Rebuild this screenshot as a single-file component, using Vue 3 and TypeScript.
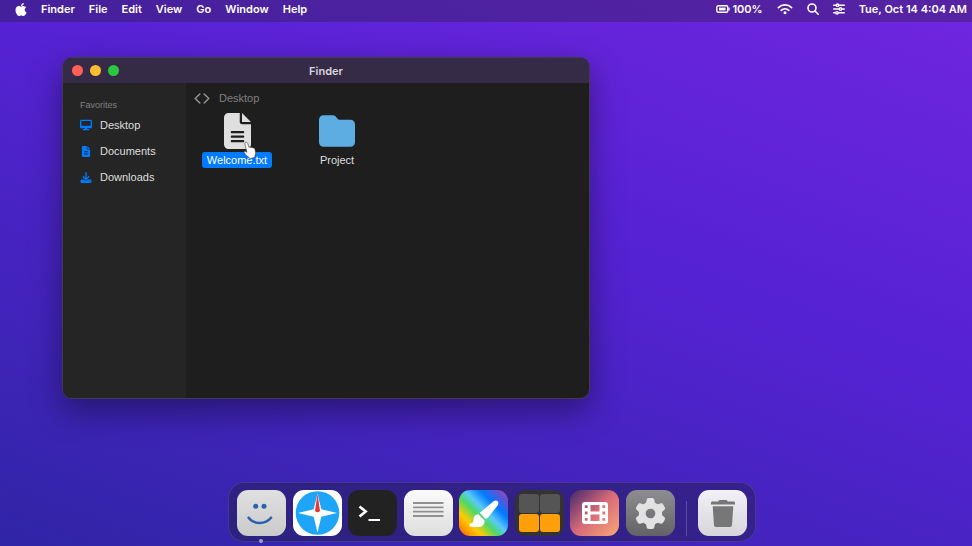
<script setup lang="ts">
import { ref } from 'vue'

interface Place {
  name: string
  icon: 'display' | 'document' | 'download'
}

const menus: string[] = ['Finder', 'File', 'Edit', 'View', 'Go', 'Window', 'Help']

const places: Place[] = [
  { name: 'Desktop', icon: 'display' },
  { name: 'Documents', icon: 'document' },
  { name: 'Downloads', icon: 'download' },
]

const selected = ref<string>('Welcome.txt')
const folder = ref<string>('Desktop')
</script>

<template>
  <div class="screen">
    <header class="menubar">
      <nav class="menus" aria-label="Menu bar">
        <button class="menu apple" type="button" aria-label="Apple menu">
          <svg viewBox="0 0 384 512" width="12" height="15" fill="currentColor">
            <path d="M318.7 268.7c-.2-36.7 16.4-64.4 50-84.8-18.8-26.9-47.2-41.7-84.7-44.6-35.5-2.8-74.3 20.7-88.5 20.7-15 0-49.4-19.7-76.4-19.7C63.3 141.2 4 184.8 4 273.5q0 39.3 14.4 81.2c12.8 36.7 59 126.7 107.2 125.2 25.2-.6 43-17.9 75.8-17.9 31.8 0 48.3 17.9 76.4 17.9 48.6-.7 90.4-82.5 102.6-119.3-65.2-30.7-61.7-90-61.7-91.9zm-56.6-164.2c27.3-32.4 24.8-61.9 24-72.5-24.1 1.4-52 16.4-67.9 34.9-17.5 19.8-27.8 44.3-25.6 71.9 26.1 2 49.9-11.4 69.5-34.3z" />
          </svg>
        </button>
        <button v-for="menu in menus" :key="menu" class="menu" type="button">{{ menu }}</button>
      </nav>
      <div class="status">
        <button class="menu battery" type="button">
          <svg viewBox="0 0 14 8" width="14" height="8">
            <rect x="0.8" y="0.8" width="11" height="6.4" rx="1.5" fill="none" stroke="currentColor" stroke-width="1.4" />
            <rect x="3" y="2.6" width="6.6" height="2.8" fill="currentColor" />
            <rect x="12.4" y="2.5" width="1.3" height="3" rx="0.6" fill="currentColor" />
          </svg>
          <span>100%</span>
        </button>
        <button class="menu" type="button" aria-label="Wi-Fi">
          <svg viewBox="0 0 16 12" width="16" height="12" fill="none" stroke="currentColor" stroke-width="1.7" stroke-linecap="round">
            <path d="M1.4 4.6a9.4 9.4 0 0 1 13.2 0" />
            <path d="M4.2 7.3a5.5 5.5 0 0 1 7.6 0" />
            <circle cx="8" cy="9.8" r="1.5" fill="currentColor" stroke="none" />
          </svg>
        </button>
        <button class="menu" type="button" aria-label="Search">
          <svg viewBox="0 0 12 12" width="12" height="12" fill="none" stroke="currentColor" stroke-width="1.6" stroke-linecap="round">
            <circle cx="5" cy="5" r="4" />
            <path d="M8 8l3.2 3.2" />
          </svg>
        </button>
        <button class="menu" type="button" aria-label="Control Center">
          <svg viewBox="0 0 12 12" width="12" height="12" fill="none" stroke="currentColor" stroke-width="1.4" stroke-linecap="round">
            <path d="M0.7 2.2h2M6.3 2.2h5M0.7 6h5M9.3 6h2M0.7 9.8h1.5M5.8 9.8h5.5" />
            <circle cx="4.5" cy="2.2" r="1.2" />
            <circle cx="7.5" cy="6" r="1.2" />
            <circle cx="4" cy="9.8" r="1.2" />
          </svg>
        </button>
        <time class="clock">Tue, Oct 14 4:04 AM</time>
      </div>
    </header>

    <main class="desktop">
      <section class="window" aria-label="Finder">
        <div class="titlebar">
          <div class="lights">
            <button class="light close" type="button" aria-label="Close"></button>
            <button class="light minimize" type="button" aria-label="Minimize"></button>
            <button class="light zoom" type="button" aria-label="Zoom"></button>
          </div>
          <h1 class="title">Finder</h1>
        </div>
        <div class="body">
          <aside class="sidebar">
            <h2 class="heading">Favorites</h2>
            <button v-for="place in places" :key="place.name" class="place" type="button" @click="folder = place.name">
              <svg v-if="place.icon === 'display'" viewBox="0 0 576 512" width="12" height="12" fill="currentColor">
                <path d="M64 0C28.700 0 0 28.700 0 64V352c0 35.300 28.700 64 64 64H240l-10.700 32H160c-17.700 0-32 14.300-32 32s14.300 32 32 32H416c17.700 0 32-14.300 32-32s-14.300-32-32-32H346.700L336 416H512c35.300 0 64-28.700 64-64V64c0-35.300-28.700-64-64-64H64zM512 64V288H64V64H512z" />
              </svg>
              <svg v-else-if="place.icon === 'document'" viewBox="0 0 384 512" width="12" height="11" fill="currentColor" fill-rule="evenodd">
                <path d="M64 0C28.700 0 0 28.700 0 64V448c0 35.300 28.700 64 64 64H320c35.300 0 64-28.700 64-64V160H256c-17.700 0-32-14.300-32-32V0H64zM256 0V128H384L256 0zM110 250H274V296H110zM110 350H274V396H110z" />
              </svg>
              <svg v-else viewBox="0 0 512 512" width="12" height="11" fill="currentColor">
                <path d="M288 32c0-17.700-14.300-32-32-32s-32 14.300-32 32V274.700l-73.400-73.400c-12.500-12.500-32.800-12.500-45.300 0s-12.500 32.800 0 45.300l128 128c12.500 12.500 32.800 12.500 45.300 0l128-128c12.500-12.500 12.500-32.800 0-45.300s-32.800-12.500-45.300 0L288 274.700V32zM64 352c-35.300 0-64 28.700-64 64v32c0 35.300 28.700 64 64 64H448c35.300 0 64-28.700 64-64V416c0-35.300-28.700-64-64-64H346.500l-45.300 45.300c-25 25-65.500 25-90.500 0L165.500 352H64zm368 56a24 24 0 1 1 0 48 24 24 0 1 1 0-48z" />
              </svg>
              <span>{{ place.name }}</span>
            </button>
          </aside>
          <div class="content">
            <div class="pathbar">
              <div class="arrows">
                <button class="arrow" type="button" aria-label="Back">
                  <svg viewBox="0 0 7 11" width="7" height="11"><path d="M5.800 1L1.200 5.500L5.800 10" /></svg>
                </button>
                <button class="arrow" type="button" aria-label="Forward">
                  <svg viewBox="0 0 7 11" width="7" height="11"><path d="M1.200 1L5.800 5.500L1.200 10" /></svg>
                </button>
              </div>
              <span>{{ folder }}</span>
            </div>
            <div class="files">
              <button class="file" :class="{ selected: selected === 'Welcome.txt' }" type="button" @click="selected = 'Welcome.txt'">
                <svg class="file-icon" viewBox="0 0 384 512" width="27" height="36" fill="#dfdfdf" fill-rule="evenodd">
                  <path d="M64 0C28.700 0 0 28.700 0 64V448c0 35.300 28.700 64 64 64H320c35.300 0 64-28.700 64-64V160H256c-17.700 0-32-14.300-32-32V0H64zM256 0V128H384L256 0zM112 256H272c8.800 0 16 7.200 16 16s-7.200 16-16 16H112c-8.800 0-16-7.200-16-16s7.200-16 16-16zm0 64H272c8.800 0 16 7.200 16 16s-7.200 16-16 16H112c-8.800 0-16-7.200-16-16s7.200-16 16-16zm0 64H272c8.800 0 16 7.200 16 16s-7.200 16-16 16H112c-8.800 0-16-7.200-16-16s7.200-16 16-16z" />
                </svg>
                <span class="label">Welcome.txt</span>
                <svg class="cursor" viewBox="0 0 14 18" width="14" height="18" aria-hidden="true">
                  <path d="M2.300 1.700c.9-.7 2-.3 2.400.8l1.300 4 .8-.5 1.300.5.900-.2 1 .8c1.200-.2 1.800.3 2 1.300l.6 3.300c.2 1.300-.3 2.300-.8 3.200l.2 1.500-5.600 1.200-.8-1.500c-1.800-.8-3.100-2.700-4.400-4.600-.6-1 .6-1.800 1.500-1.100l1.200.9L1.900 3.300c-.2-.7 0-1.300.4-1.600z" fill="#fff" stroke="#333" stroke-width="0.6" stroke-linejoin="round" />
                </svg>
              </button>
              <button class="file" :class="{ selected: selected === 'Project' }" type="button" @click="selected = 'Project'">
                <svg class="file-icon" viewBox="0 0 512 512" width="36" height="36" fill="#5dade2">
                  <path d="M64 480H448c35.300 0 64-28.700 64-64V160c0-35.300-28.700-64-64-64H288c-10.100 0-19.600-4.700-25.600-12.800L243.200 57.600C231.100 41.500 212.100 32 192 32H64C28.700 32 0 60.700 0 96V416c0 35.300 28.700 64 64 64z" />
                </svg>
                <span class="label">Project</span>
              </button>
            </div>
          </div>
        </div>
      </section>
    </main>

    <footer class="dock-area">
      <nav class="dock" aria-label="Dock">
        <div class="apps">
          <button class="app finder" type="button" aria-label="Finder">
            <svg viewBox="0 0 49 46" width="49" height="46">
              <circle cx="18.700" cy="16.300" r="2.500" fill="#2b62b0" />
              <circle cx="27" cy="16.300" r="2.500" fill="#2b62b0" />
              <path d="M11.600 27.700c5.500 7 16.700 7 22.400 0" fill="none" stroke="#2b62b0" stroke-width="2.600" stroke-linecap="round" />
            </svg>
            <span class="running"></span>
          </button>
          <button class="app safari" type="button" aria-label="Safari">
            <svg viewBox="0 0 49 46" width="49" height="46">
              <circle cx="24.500" cy="23" r="21.800" fill="#1fa5f8" />
              <path d="M24.500 3.500L28.300 19.200L44 23L28.300 26.800L24.500 42.500L20.700 26.800L5 23L20.700 19.200Z" fill="#fff" />
              <path d="M24.500 3.500L27 21Q24.500 23.500 22 21Z" fill="#e53935" />
            </svg>
          </button>
          <button class="app terminal" type="button" aria-label="Terminal">
            <svg viewBox="0 0 49 46" width="49" height="46" fill="none" stroke="#fff">
              <path d="M11.500 16.500L17.700 21.500L11.500 26.500" stroke-width="2.600" />
              <path d="M20.500 30H32" stroke-width="2" />
            </svg>
          </button>
          <button class="app notes" type="button" aria-label="Notes">
            <svg viewBox="0 0 49 46" width="49" height="46" fill="none" stroke="#91918f" stroke-width="1.800">
              <path d="M9 13h30.500M9 17.300h30.500M9 21.600h30.500M9 26h30.500" />
            </svg>
          </button>
          <button class="app paint" type="button" aria-label="Paint">
            <svg viewBox="0 0 30 27" width="30" height="27" fill="#fff">
              <path d="M10.600 13L24.500 1.300Q27 -.4 28.800 1.300Q30 3 28.600 5.500L19.500 17Q18 19 15.800 18.600Q13.800 15 10.600 13Z" />
              <path d="M9.300 14.200Q4.500 14.800 4.500 19.700Q4.500 22.700 3 23.200L1.500 23.600Q0 24.500 .4 26Q1 27 2.500 27H10Q15.500 26.700 15.700 20.500Q13 18 9.300 14.200Z" />
            </svg>
          </button>
          <button class="app calculator" type="button" aria-label="Calculator">
            <span class="key"></span><span class="key"></span>
            <span class="key orange"></span><span class="key orange"></span>
          </button>
          <button class="app movies" type="button" aria-label="Movies">
            <svg viewBox="0 0 26 22" width="26" height="22" fill="#fff" fill-rule="evenodd">
              <path d="M3 0H23A3 3 0 0 1 26 3V19A3 3 0 0 1 23 22H3A3 3 0 0 1 0 19V3A3 3 0 0 1 3 0ZM8.500 3H17.500V9.500H8.500ZM8.500 12.500H17.500V19H8.500ZM2.800 3.200H5.600V6H2.800ZM2.800 9.600H5.600V12.400H2.800ZM2.800 16H5.600V18.800H2.800ZM20.400 3.200H23.200V6H20.400ZM20.400 9.600H23.200V12.400H20.400ZM20.400 16H23.200V18.800H20.400Z" />
            </svg>
          </button>
          <button class="app settings" type="button" aria-label="Settings">
            <svg viewBox="0 0 512 512" width="31" height="31" fill="#e2e2e3">
              <path d="M495.900 166.600c3.200 8.700 .5 18.400-6.400 24.600l-43.300 39.400c1.100 8.300 1.700 16.800 1.700 25.400s-.6 17.100-1.700 25.400l43.300 39.400c6.900 6.200 9.600 15.900 6.400 24.600c-4.400 11.900-9.700 23.300-15.800 34.300l-4.700 8.100c-6.600 11-14 21.400-22.100 31.200c-5.900 7.200-15.700 9.600-24.500 6.800l-55.700-17.700c-13.400 10.300-28.200 18.900-44 25.400l-12.500 57.100c-2 9.100-9 16.300-18.200 17.800c-13.800 2.300-28 3.500-42.500 3.500s-28.700-1.200-42.500-3.500c-9.200-1.500-16.200-8.700-18.200-17.800l-12.500-57.100c-15.800-6.500-30.600-15.100-44-25.400L83.100 425.900c-8.800 2.800-18.600 .3-24.500-6.800c-8.100-9.800-15.500-20.200-22.100-31.200l-4.700-8.100c-6.100-11-11.400-22.400-15.800-34.300c-3.200-8.700-.5-18.400 6.400-24.600l43.300-39.400C64.600 273.100 64 264.600 64 256s.6-17.100 1.700-25.400L22.400 191.200c-6.900-6.200-9.600-15.900-6.400-24.600c4.400-11.900 9.700-23.300 15.800-34.300l4.700-8.100c6.600-11 14-21.400 22.100-31.200c5.900-7.200 15.700-9.600 24.500-6.800l55.700 17.700c13.400-10.300 28.200-18.900 44-25.400l12.500-57.100c2-9.100 9-16.300 18.200-17.800C227.300 1.200 241.500 0 256 0s28.700 1.200 42.500 3.500c9.200 1.500 16.200 8.700 18.200 17.800l12.500 57.100c15.800 6.500 30.600 15.100 44 25.400l55.700-17.700c8.800-2.800 18.600-.3 24.500 6.800c8.100 9.800 15.500 20.200 22.100 31.200l4.700 8.100c6.100 11 11.400 22.400 15.800 34.300zM256 336a80 80 0 1 0 0-160 80 80 0 1 0 0 160z" />
            </svg>
          </button>
        </div>
        <span class="divider"></span>
        <button class="app trash" type="button" aria-label="Trash">
          <svg viewBox="0 0 24 27" width="24" height="27" fill="#777778">
            <path d="M1.200 1.400H7.200L8.300 0H15.700L16.800 1.400H22.800Q24 1.400 24 2.600V4.600H0V2.600Q0 1.400 1.200 1.400Z" />
            <path d="M1.700 6.300H22.300L21 25.200Q20.900 27 19 27H5Q3.100 27 3 25.200Z" />
          </svg>
        </button>
      </nav>
    </footer>
  </div>
</template>

<style>
body {
  margin: 0;
}
</style>

<style scoped>
.screen {
  position: relative;
  display: flex;
  flex-direction: column;
  min-height: 100vh;
  overflow: hidden;
  background: linear-gradient(20deg, #3025a6 0%, #5522d3 58%, #7026df 100%);
  color: #fff;
  font-family: Inter, "Liberation Sans", sans-serif;
  font-size: 11px;
  line-height: 16px;
}

button {
  margin: 0;
  padding: 0;
  border: 0;
  background: none;
  color: inherit;
  font: inherit;
}

svg {
  display: block;
}

.menubar {
  display: flex;
  justify-content: space-between;
  align-items: center;
  box-sizing: border-box;
  height: 22px;
  padding: 0 5px 4px 15px;
  background: rgba(30, 30, 30, 0.3);
  font-weight: 600;
}

.menus,
.status {
  display: flex;
  align-items: center;
  gap: 14px;
}

.battery {
  display: flex;
  align-items: center;
  gap: 2px;
}

.desktop {
  flex: 1;
}

.window {
  position: absolute;
  left: 62px;
  top: 57px;
  display: flex;
  flex-direction: column;
  box-sizing: border-box;
  width: 528px;
  min-height: 342px;
  overflow: hidden;
  border: 1px solid #423b50;
  border-radius: 10px;
  background: #1e1e1e;
  box-shadow: 0 12px 32px rgba(0, 0, 0, 0.4);
}

.titlebar {
  display: grid;
  grid-template-columns: 1fr auto 1fr;
  align-items: center;
  height: 25px;
  padding: 0 9px;
  background: #352b46;
}

.lights {
  display: flex;
  gap: 7px;
}

.light {
  width: 11px;
  height: 11px;
  border-radius: 50%;
}

.close {
  background: #ff5f57;
}

.minimize {
  background: #febc2e;
}

.zoom {
  background: #28c840;
}

.title {
  margin: 0;
  color: #d9d5df;
  font-size: 11px;
  font-weight: 600;
}

.body {
  display: flex;
  flex: 1;
  font-family: "Liberation Sans", Arial, sans-serif;
}

.sidebar {
  display: flex;
  flex-direction: column;
  gap: 10px;
  box-sizing: border-box;
  width: 123px;
  padding: 14px 17px;
  background: #252525;
}

.heading {
  margin: 0 0 -6px;
  color: #808080;
  font-size: 9px;
  font-weight: 400;
}

.place {
  display: flex;
  align-items: center;
  gap: 8px;
  color: #dfdfdf;
}

.place svg {
  color: #007aff;
}

.content {
  flex: 1;
  padding: 7px 8px;
}

.pathbar {
  display: flex;
  align-items: center;
  gap: 9px;
  color: #808080;
}

.arrows {
  display: flex;
  gap: 2px;
}

.arrow path {
  fill: none;
  stroke: #929292;
  stroke-width: 1.5;
  stroke-linecap: round;
  stroke-linejoin: round;
}

.files {
  display: flex;
  gap: 16px;
  padding: 7px 1px 0;
}

.file {
  position: relative;
  display: flex;
  flex-direction: column;
  align-items: center;
  gap: 3px;
  width: 84px;
  color: #dfdfdf;
}

.label {
  padding: 0 5px;
  border-radius: 3px;
}

.selected .label {
  background: #007aff;
  color: #fff;
}

.cursor {
  position: absolute;
  left: 48px;
  top: 28px;
}

.dock-area {
  display: flex;
  justify-content: center;
  padding: 0 0 4px 12px;
}

.dock {
  display: flex;
  align-items: center;
  box-sizing: border-box;
  width: 528px;
  padding: 7px 8px 5px;
  border: 1px solid rgba(255, 255, 255, 0.1);
  border-radius: 16px;
  background: rgba(30, 30, 60, 0.4);
}

.apps {
  display: flex;
  flex: 1;
  justify-content: space-between;
}

.app {
  position: relative;
  display: flex;
  align-items: center;
  justify-content: center;
  width: 49px;
  height: 46px;
  border-radius: 11px;
}

.finder {
  background: linear-gradient(#e0e0e0, #cacaca);
}

.safari {
  background: #fff;
}

.terminal {
  background: #222;
}

.notes {
  background: linear-gradient(#fbfbfb, #dedede);
}

.paint {
  background: linear-gradient(45deg, #ff3b30, #ff9500 12%, #ffcc00 25%, #4cd964 42%, #5ac8fa 54%, #007aff 70%, #5856d6 86%, #c644a0);
}

.calculator {
  display: grid;
  grid-template-columns: 1fr 1fr;
  grid-template-rows: 1fr 1fr;
  gap: 1px;
  padding: 4px;
  background: #333;
}

.key {
  width: 100%;
  height: 100%;
  border-radius: 3px;
  background: #555;
}

.orange {
  background: #ff9f0a;
}

.movies {
  background: linear-gradient(135deg, #42286c, #d86a78 50%, #f8a878);
}

.settings {
  background: linear-gradient(#8e8e92, #636365);
}

.trash {
  background: linear-gradient(#f2f1f7, #d5d5da);
}

.divider {
  align-self: flex-end;
  width: 1px;
  height: 35px;
  margin: 0 11px;
  background: rgba(255, 255, 255, 0.2);
}

.running {
  position: absolute;
  left: 22px;
  top: 49px;
  width: 4px;
  height: 4px;
  border-radius: 50%;
  background: #a49bd5;
}
</style>
